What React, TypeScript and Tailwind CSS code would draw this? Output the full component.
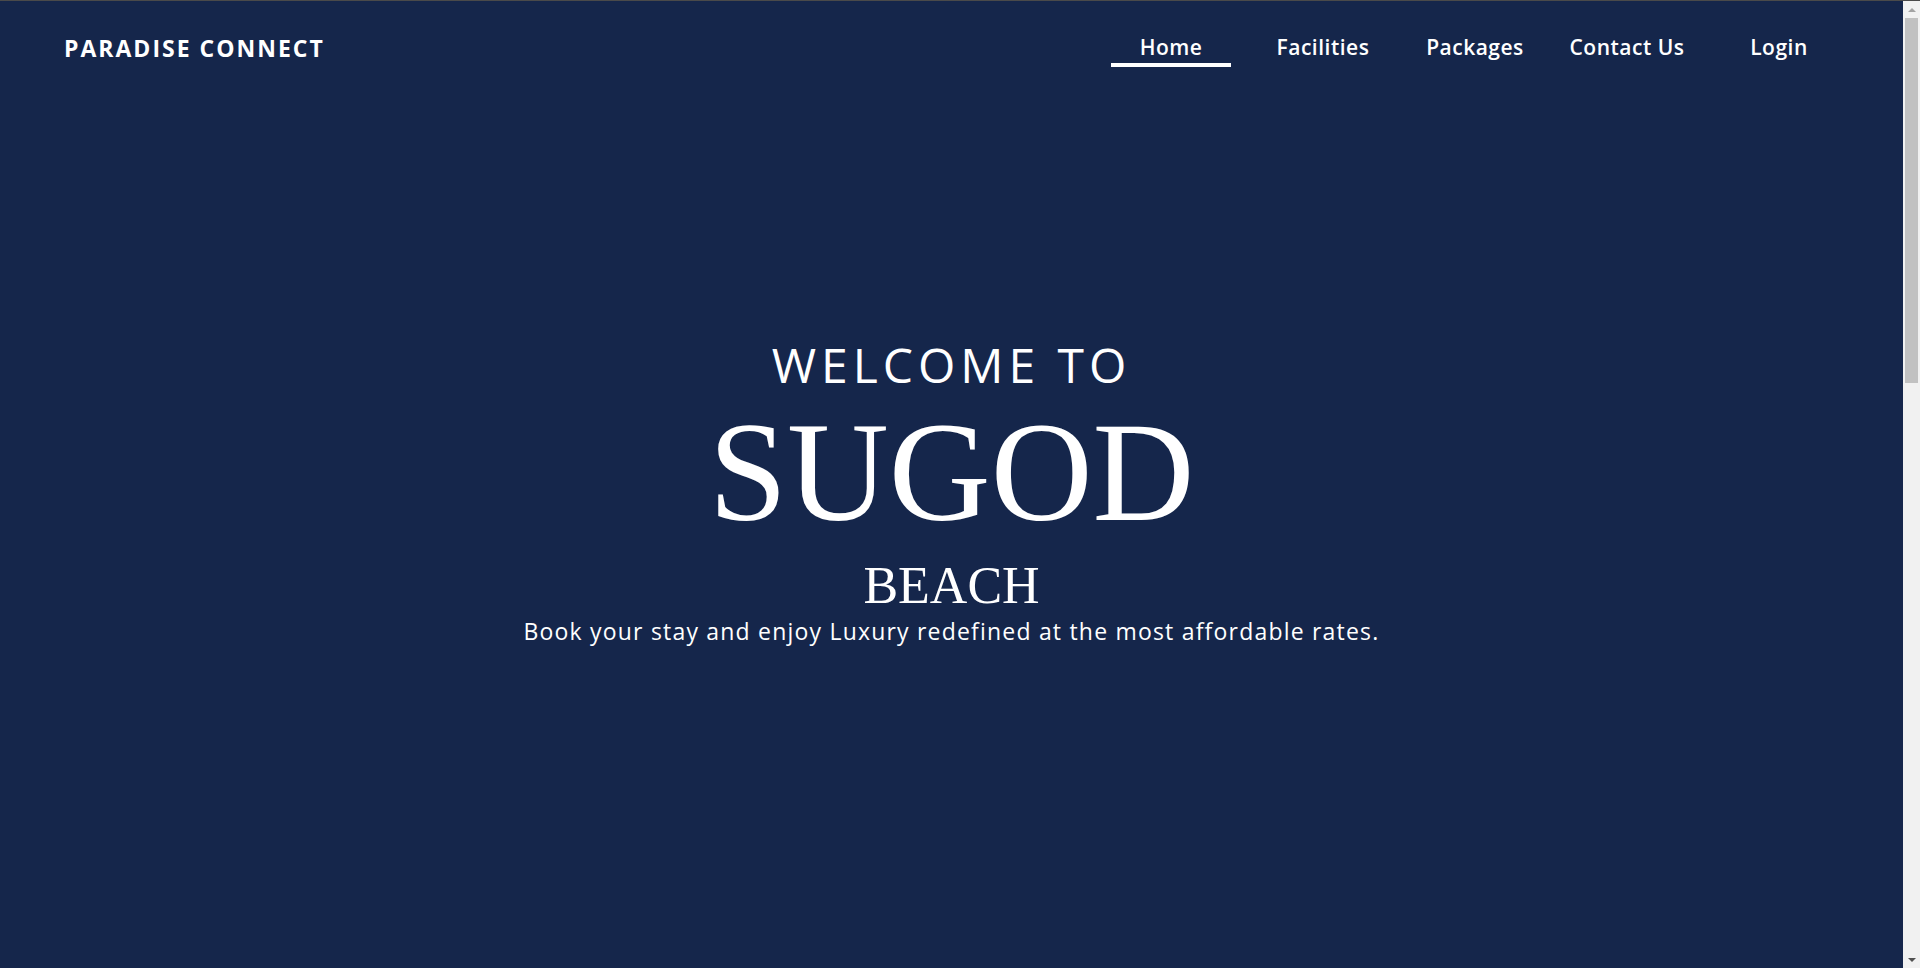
const navItems = ["Home", "Facilities", "Packages", "Contact Us", "Login"];

const Navbar = () => {
  return (
    <nav className="flex h-[96px] items-center justify-between pl-16 pr-[81px]">
      <h1 className="pb-[1px] font-['Open_Sans',sans-serif] text-[23px] font-bold tracking-[2px] text-white">
        PARADISE CONNECT
      </h1>
      <ul className="flex gap-8 pt-[1px]">
        {navItems.map((item) => (
          <li key={item} className="w-[120px]">
            <a
              href="#"
              className="flex flex-col items-center font-['Open_Sans',sans-serif] text-[21px] font-semibold tracking-[0.5px] text-white"
            >
              <span>{item}</span>
              <span
                className={`h-[4px] w-full ${
                  item === "Home" ? "bg-white" : "bg-transparent"
                }`}
              />
            </a>
          </li>
        ))}
      </ul>
    </nav>
  );
};

const Hero = () => {
  return (
    <section className="flex flex-col items-center pr-[17px] pt-[240px] text-center text-white">
      <h2 className="font-['Open_Sans',sans-serif] text-[48px] leading-[56px] tracking-[5px]">
        WELCOME TO
      </h2>
      <h3 className="mt-[4px] font-['Liberation_Serif',serif] text-[141px] leading-[150px]">
        SUGOD
      </h3>
      <h4 className="mt-[13px] font-['Liberation_Serif',serif] text-[52px] leading-[52px]">
        BEACH
      </h4>
      <p className="mt-[3px] font-['Open_Sans',sans-serif] text-[23px] leading-[32px] tracking-[1.2px]">
        Book your stay and enjoy Luxury redefined at the most affordable rates.
      </p>
    </section>
  );
};

const Scrollbar = () => {
  return (
    <div className="fixed bottom-0 right-0 top-[1px] flex w-[17px] flex-col items-center bg-[#f1f1f1]">
      <div className="flex h-[17px] w-full items-center justify-center">
        <span className="h-0 w-0 border-x-[4px] border-b-[4px] border-x-transparent border-b-[#a3a3a3]" />
      </div>
      <div className="h-[365px] w-[13px] bg-[#c1c1c1]" />
      <div className="flex-1" />
      <div className="flex h-[17px] w-full items-center justify-center">
        <span className="h-0 w-0 border-x-[4px] border-t-[4px] border-x-transparent border-t-[#505050]" />
      </div>
    </div>
  );
};

export default function App() {
  return (
    <div className="min-h-[2477px] border-t border-[#4a4a4a] bg-[#15264b]">
      <Navbar />
      <Hero />
      <Scrollbar />
    </div>
  );
}
